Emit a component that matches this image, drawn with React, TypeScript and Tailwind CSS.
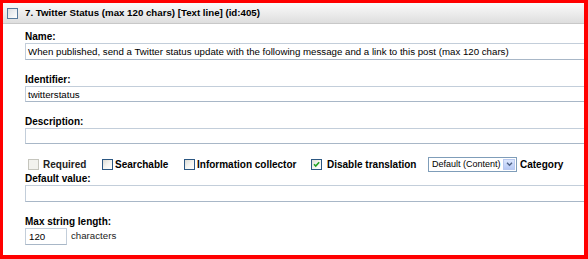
import React from 'react'

const font = { fontFamily: '"Liberation Sans", Arial, sans-serif' }

function CheckBox({ checked = false, disabled = false }: { checked?: boolean; disabled?: boolean }) {
  if (disabled) {
    return <span className="block h-[11px] w-[11px] shrink-0 border border-[#c5c5bd] bg-[#f2f2ee]" />
  }
  return (
    <span className="relative block h-[11px] w-[11px] shrink-0 border border-[#2c5782] bg-gradient-to-br from-[#dcdcd6] via-[#f4f4f0] to-white">
      {checked && (
        <svg viewBox="0 0 9 9" className="absolute left-0 top-0 h-[9px] w-[9px]">
          <path d="M2 4.2 L3.7 6 L7.2 2.3" fill="none" stroke="#21a121" strokeWidth="1.6" />
        </svg>
      )}
    </span>
  )
}

function Label({ children, className = '' }: { children: React.ReactNode; className?: string }) {
  return <div className={`h-[13px] text-[10px] font-bold leading-[13px] text-black ${className}`}>{children}</div>
}

function TextInput({ value = '', h = 'h-[17px]' }: { value?: string; h?: string }) {
  return (
    <div
      className={`${h} w-[calc(100%+6px)] whitespace-nowrap border border-[#c3ceda] border-b-[#a8b7c7] bg-white pl-[2px] text-[9.7px] leading-[15px] text-black`}
    >
      {value}
    </div>
  )
}

export default function App() {
  return (
    <div
      className="h-[259px] w-[588px] overflow-hidden border-b-[4px] border-l-[3px] border-r-[4px] border-t-[3px] border-[#ff0000] bg-white"
      style={font}
    >
      <div className="flex h-[21px] items-center border-b border-[#c8c8c8] bg-gradient-to-b from-[#fbfbfb] to-[#dedede] pl-[4px]">
        <span className="block h-[11px] w-[11px] border border-[#587a9c] bg-gradient-to-br from-[#dcdfe3] to-white" />
        <span className="ml-[7px] text-[9.7px] font-bold text-black">
          7. Twitter Status (max 120 chars) [Text line] (id:405)
        </span>
      </div>

      <div className="overflow-hidden pl-[22px]">
        <Label className="mt-[6px]">Name:</Label>
        <TextInput value="When published, send a Twitter status update with the following message and a link to this post (max 120 chars)" />

        <Label className="mt-[13px]">Identifier:</Label>
        <TextInput value="twitterstatus" h="h-[16px]" />

        <Label className="mt-[13px]">Description:</Label>
        <TextInput h="h-[16px]" />

        <div className="mt-[13px] flex h-[15px] items-center pl-[3px] text-[10px] font-bold">
          <div className="flex w-[74px] items-center gap-[4px] text-[#222]">
            <CheckBox disabled />
            <span>Required</span>
          </div>
          <div className="flex w-[82px] items-center gap-[2px]">
            <CheckBox />
            <span>Searchable</span>
          </div>
          <div className="flex w-[127px] items-center gap-[2px]">
            <CheckBox />
            <span>Information collector</span>
          </div>
          <div className="flex w-[117px] items-center gap-[5px]">
            <CheckBox checked />
            <span>Disable translation</span>
          </div>
          <div className="flex h-[15px] w-[89px] shrink-0 items-center justify-between whitespace-nowrap border border-[#7f9db9] bg-white pl-[3px] pr-[1px] text-[9px] font-normal">
            <span>Default (Content)</span>
            <span className="flex h-[11px] w-[12px] items-center justify-center border border-[#b9c9ef] bg-gradient-to-b from-[#dbe6fd] to-[#b6c9f4]">
              <svg viewBox="0 0 8 6" className="h-[5px] w-[7px]">
                <path d="M1 1 L4 4 L7 1" fill="none" stroke="#4d6185" strokeWidth="1.6" />
              </svg>
            </span>
          </div>
          <span className="ml-[3px]">Category</span>
        </div>

        <Label className="h-[12px] leading-[12px]">Default value:</Label>
        <TextInput />

        <Label className="mt-[13px] h-[12px] leading-[12px]">Max string length:</Label>
        <div className="flex items-center">
          <div className="h-[17px] w-[42px] border border-[#c3ceda] border-b-[#a8b7c7] pl-[3px] text-[9.7px] leading-[15px]">
            120
          </div>
          <span className="ml-[4px] text-[9.7px] text-[#222]">characters</span>
        </div>
      </div>
    </div>
  )
}
